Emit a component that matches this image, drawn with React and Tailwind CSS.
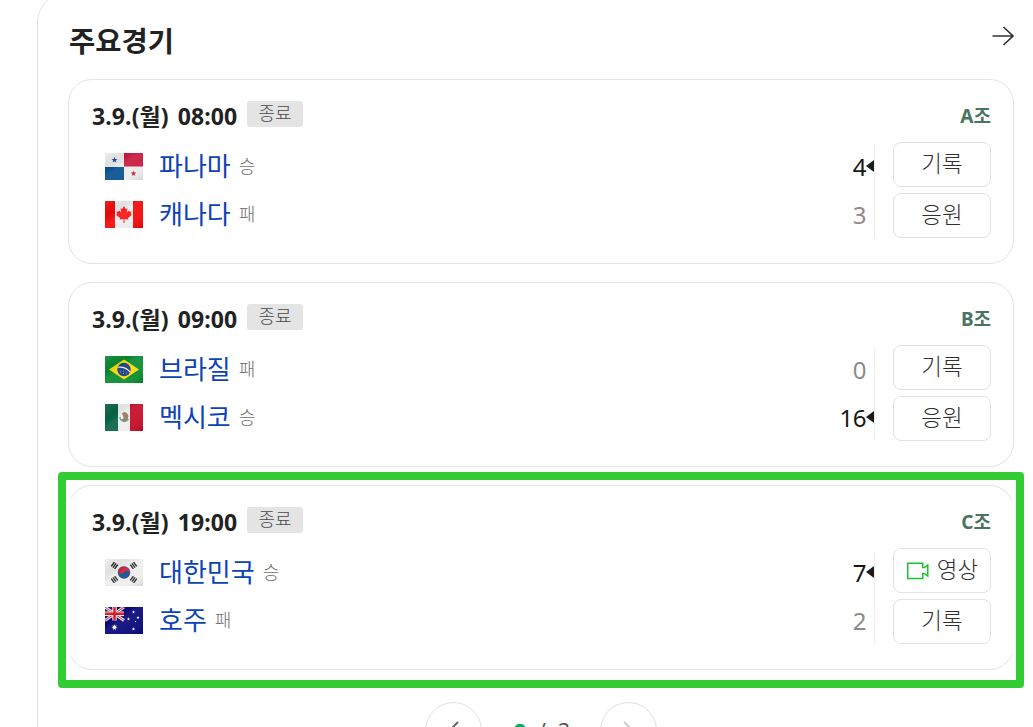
import { clsx } from "clsx";

const Star = ({ x, y, r, fill, points = 5 }) => {
  const pts = Array.from({ length: points * 2 }, (_, i) => {
    const radius = i % 2 ? r * 0.42 : r;
    const angle = (Math.PI * i) / points - Math.PI / 2;
    return `${x + radius * Math.cos(angle)},${y + radius * Math.sin(angle)}`;
  }).join(" ");
  return <polygon points={pts} fill={fill} />;
};

const Panama = () => (
  <>
    <rect width="38" height="27" fill="#ececec" />
    <path d="M19 0h19v13.5H19z" fill="#c8183f" />
    <path d="M0 14h19v13H0z" fill="#075091" />
    <Star x={9.5} y={7} r={3} fill="#1c4b8c" />
    <Star x={28.5} y={20.5} r={3} fill="#c81e36" />
  </>
);

const Canada = () => (
  <>
    <rect width="38" height="27" fill="#ececec" />
    <path d="M0 0h10v27H0zM28 0h10v27H28z" fill="#f20808" />
    <path
      d="M19 5l1.7 3 1.7-.8-.7 4.3 2.3-2 .6 1.3 2-.3-.9 2.6 1.2.7-4 3.4.4 1.3-3.8-.5V22h-1v-4l-3.8.5.4-1.3-4-3.4 1.2-.7-.9-2.6 2 .3.6-1.3 2.3 2-.7-4.3 1.7.8z"
      fill="#fb1414"
    />
  </>
);

const Brazil = () => (
  <>
    <rect width="38" height="27" fill="#098b2f" />
    <path d="M19 3.5L34 13.5 19 23.5 4 13.5z" fill="#f8dc08" />
    <circle cx="19" cy="13.5" r="6.7" fill="#173a82" />
    <path d="M12.7 11.3c5-.6 9.5 1 12.5 4.8" fill="none" stroke="#e5eee8" strokeWidth="1.1" />
    <path d="M15 16h1M18 17.5h1M21 17h1M18 15h1" stroke="#a9bfdd" strokeWidth=".7" />
  </>
);

const Mexico = () => (
  <>
    <rect width="38" height="27" fill="#eeeeee" />
    <path d="M0 0h13v27H0z" fill="#086446" />
    <path d="M25 0h13v27H25z" fill="#c40d28" />
    <path d="M15 13a4.5 4.5 0 0 0 8.5 2" fill="none" stroke="#7b9a76" strokeWidth="1.5" />
    <path d="M17 9.5l2-1.5 3 1 1.5 3-1 4-3 1.5-3-2 2.5-1.5z" fill="#9c7750" />
    <path d="M18 12.5l3 1.5M18 16h3" stroke="#568f8c" />
  </>
);

const Trigram = ({ x, y, angle }) => (
  <g transform={`translate(${x} ${y}) rotate(${angle})`} stroke="#222222" strokeWidth="1.4">
    <path d="M-2.7-2.1h5.4M-2.7 0h5.4M-2.7 2.1h5.4" />
  </g>
);

const Korea = () => (
  <>
    <rect width="38" height="27" fill="#eeeeee" />
    <circle cx="19" cy="13.5" r="6.2" fill="#124c91" />
    <path d="M13.8 10.2A6.2 6.2 0 0 1 24.2 16.9A3.1 3.1 0 0 0 19 13.5A3.1 3.1 0 0 1 13.8 10.2z" fill="#ce1d32" />
    <Trigram x={9.5} y={6.5} angle={-54} />
    <Trigram x={28.5} y={6.5} angle={54} />
    <Trigram x={9.5} y={20.5} angle={54} />
    <Trigram x={28.5} y={20.5} angle={-54} />
  </>
);

const Australia = () => (
  <>
    <rect width="38" height="27" fill="#07077a" />
    <path d="M0 0l19 13.5M19 0L0 13.5" stroke="#eeeeee" strokeWidth="3" />
    <path d="M0 0l19 13.5M19 0L0 13.5" stroke="#e52232" strokeWidth="1" />
    <path d="M9.5 0v13.5M0 6.7h19" stroke="#eeeeee" strokeWidth="4.5" />
    <path d="M9.5 0v13.5M0 6.7h19" stroke="#ed1525" strokeWidth="2.4" />
    <Star x={9.5} y={20.3} r={3.2} fill="#ffffff" points={7} />
    <Star x={28.5} y={5} r={1.7} fill="#ffffff" />
    <Star x={23.5} y={12} r={1.7} fill="#ffffff" />
    <Star x={33} y={10.5} r={1.7} fill="#ffffff" />
    <Star x={30.5} y={14.5} r={1} fill="#ffffff" />
    <Star x={28.5} y={22} r={1.8} fill="#ffffff" />
  </>
);

const matches = [
  {
    time: "08:00",
    group: "A조",
    teams: [
      { name: "파나마", Flag: Panama, score: 4, win: true },
      { name: "캐나다", Flag: Canada, score: 3 },
    ],
    links: ["기록", "응원"],
  },
  {
    time: "09:00",
    group: "B조",
    teams: [
      { name: "브라질", Flag: Brazil, score: 0 },
      { name: "멕시코", Flag: Mexico, score: 16, win: true },
    ],
    links: ["기록", "응원"],
  },
  {
    time: "19:00",
    group: "C조",
    teams: [
      { name: "대한민국", Flag: Korea, score: 7, win: true },
      { name: "호주", Flag: Australia, score: 2 },
    ],
    links: ["영상", "기록"],
    highlight: true,
  },
];

const TeamRow = ({ team }) => (
  <div className="flex h-12 items-center pl-[13px]">
    <svg width="38" height="27" viewBox="0 0 38 27" className="mt-px shrink-0">
      <defs>
        <linearGradient id="gloss" x1="0" y1="0" x2="1" y2="1">
          <stop offset="0" stopColor="#fff" stopOpacity=".1" />
          <stop offset=".3" stopColor="#000" stopOpacity=".05" />
          <stop offset=".45" stopColor="#fff" stopOpacity=".08" />
          <stop offset=".75" stopColor="#fff" stopOpacity=".06" />
          <stop offset="1" stopColor="#000" stopOpacity=".1" />
        </linearGradient>
      </defs>
      <team.Flag />
      <rect width="38" height="27" fill="url(#gloss)" />
    </svg>
    <span className="ml-4 pt-px text-[26px] leading-[47px] text-[#0c43b7]">{team.name}</span>
    <span className="ml-2 pt-px text-[18px] leading-[47px] font-light text-[#707070]">{team.win ? "승" : "패"}</span>
    <span
      className={clsx(
        "ml-auto pt-0.5 text-[24px] leading-[46px] tracking-[-0.5px]",
        team.win ? "text-[#171717]" : "mr-2 text-[#8b8b8b]"
      )}
    >
      {team.score}
    </span>
    {team.win && (
      <svg width="8" height="12" viewBox="0 0 8 12" className="shrink-0">
        <path d="M8 0v12L0 6z" fill="#1b1b1b" />
      </svg>
    )}
  </div>
);

const MatchCard = ({ match }) => (
  <section className="relative h-[185px] rounded-[24px] border border-[#e4e4e4] bg-white pr-[22px] pl-[23px]">
    <header className="flex h-[62px] items-start">
      <h3 className="mt-[18px] w-[155px] text-[23px] leading-9 font-bold tracking-[0.1px] [word-spacing:3px] whitespace-nowrap text-[#222222]">
        3.9.(월) {match.time}
      </h3>
      <span className="mt-[21px] h-[26px] w-14 rounded-[3px] bg-[#e4e4e4] text-center text-[18px] leading-[25px] font-light text-[#4a4a4a]">
        종료
      </span>
      <span className="mt-[22px] ml-auto text-[19px] leading-7 font-bold text-[#49745f]">{match.group}</span>
    </header>
    <div className="flex">
      <div className="flex-1">
        {match.teams.map((team) => (
          <TeamRow key={team.name} team={team} />
        ))}
      </div>
      <div className="mt-[3px] h-[93px] w-px bg-[#eeeeee]" />
      <div className="ml-[18px] flex w-[98px] flex-col gap-1.5">
        {match.links.map((link) => (
          <button
            key={link}
            className="flex h-[45px] items-center justify-center rounded-lg border border-[#e2e2e5] text-[22.5px] leading-none font-light text-[#303034]"
          >
            {link === "영상" && (
              <svg width="22" height="18" viewBox="0 0 22 18" className="mt-px mr-2 ml-px" fill="none" stroke="#18c62b" strokeWidth="1.5">
                <path d="M.75 1.25h15v4.25h1.5l3.5-2.5v11l-3.5-2.500h-1.500v5H.75z" />
              </svg>
            )}
            <span>{link}</span>
          </button>
        ))}
      </div>
    </div>
    {match.highlight && (
      <div className="pointer-events-none absolute -top-[14px] -right-[11px] -left-[11px] h-[216px] rounded-[4px] border-8 border-[#32cd32]">
        <div className="h-full border-r-4 border-l-[5px] border-white" />
      </div>
    )}
  </section>
);

const App = () => (
  <main className="h-[727px] overflow-hidden bg-white font-['Noto_Sans','Noto_Sans_CJK_KR',sans-serif]">
    <div className="-mt-[9px] ml-[37px] h-[800px] w-[1020px] rounded-[32px] border border-[#e2e2e2] pl-[30px]">
      <div className="w-[946px]">
        <div className="flex h-[87px] items-center justify-between pt-1.5">
          <h2 className="mt-1 pl-px text-[28.5px] leading-10 font-bold text-[#222222]">주요경기</h2>
          <svg width="22" height="20" viewBox="0 0 22 20" className="-mt-[5px]" fill="none" stroke="#303038" strokeWidth="1.6">
            <path d="M.5 10H21M11.5 1L21 10l-9.5 9" />
          </svg>
        </div>
        <div className="flex flex-col gap-[18px]">
          {matches.map((match) => (
            <MatchCard key={match.group} match={match} />
          ))}
        </div>
        <nav className="mt-8 flex justify-center">
          <button className="flex size-[57px] items-center justify-center rounded-full border border-[#e0e0e0]">
            <svg width="11" height="20" viewBox="0 0 11 20" fill="none" stroke="#666666" strokeWidth="2">
              <path d="M10 1L1 10l9 9" />
            </svg>
          </button>
          <span className="w-[118px] pt-[15px] pl-0.5 text-center text-[21px] leading-7 text-[#555555]">
            <b className="text-[#03aa5a]">2</b>
            <span className="mx-3">/</span>3
          </span>
          <button className="flex size-[57px] items-center justify-center rounded-full border border-[#e0e0e0]">
            <svg width="11" height="20" viewBox="0 0 11 20" fill="none" stroke="#cccccc" strokeWidth="2">
              <path d="M1 1l9 9-9 9" />
            </svg>
          </button>
        </nav>
      </div>
    </div>
  </main>
);

export default App;
